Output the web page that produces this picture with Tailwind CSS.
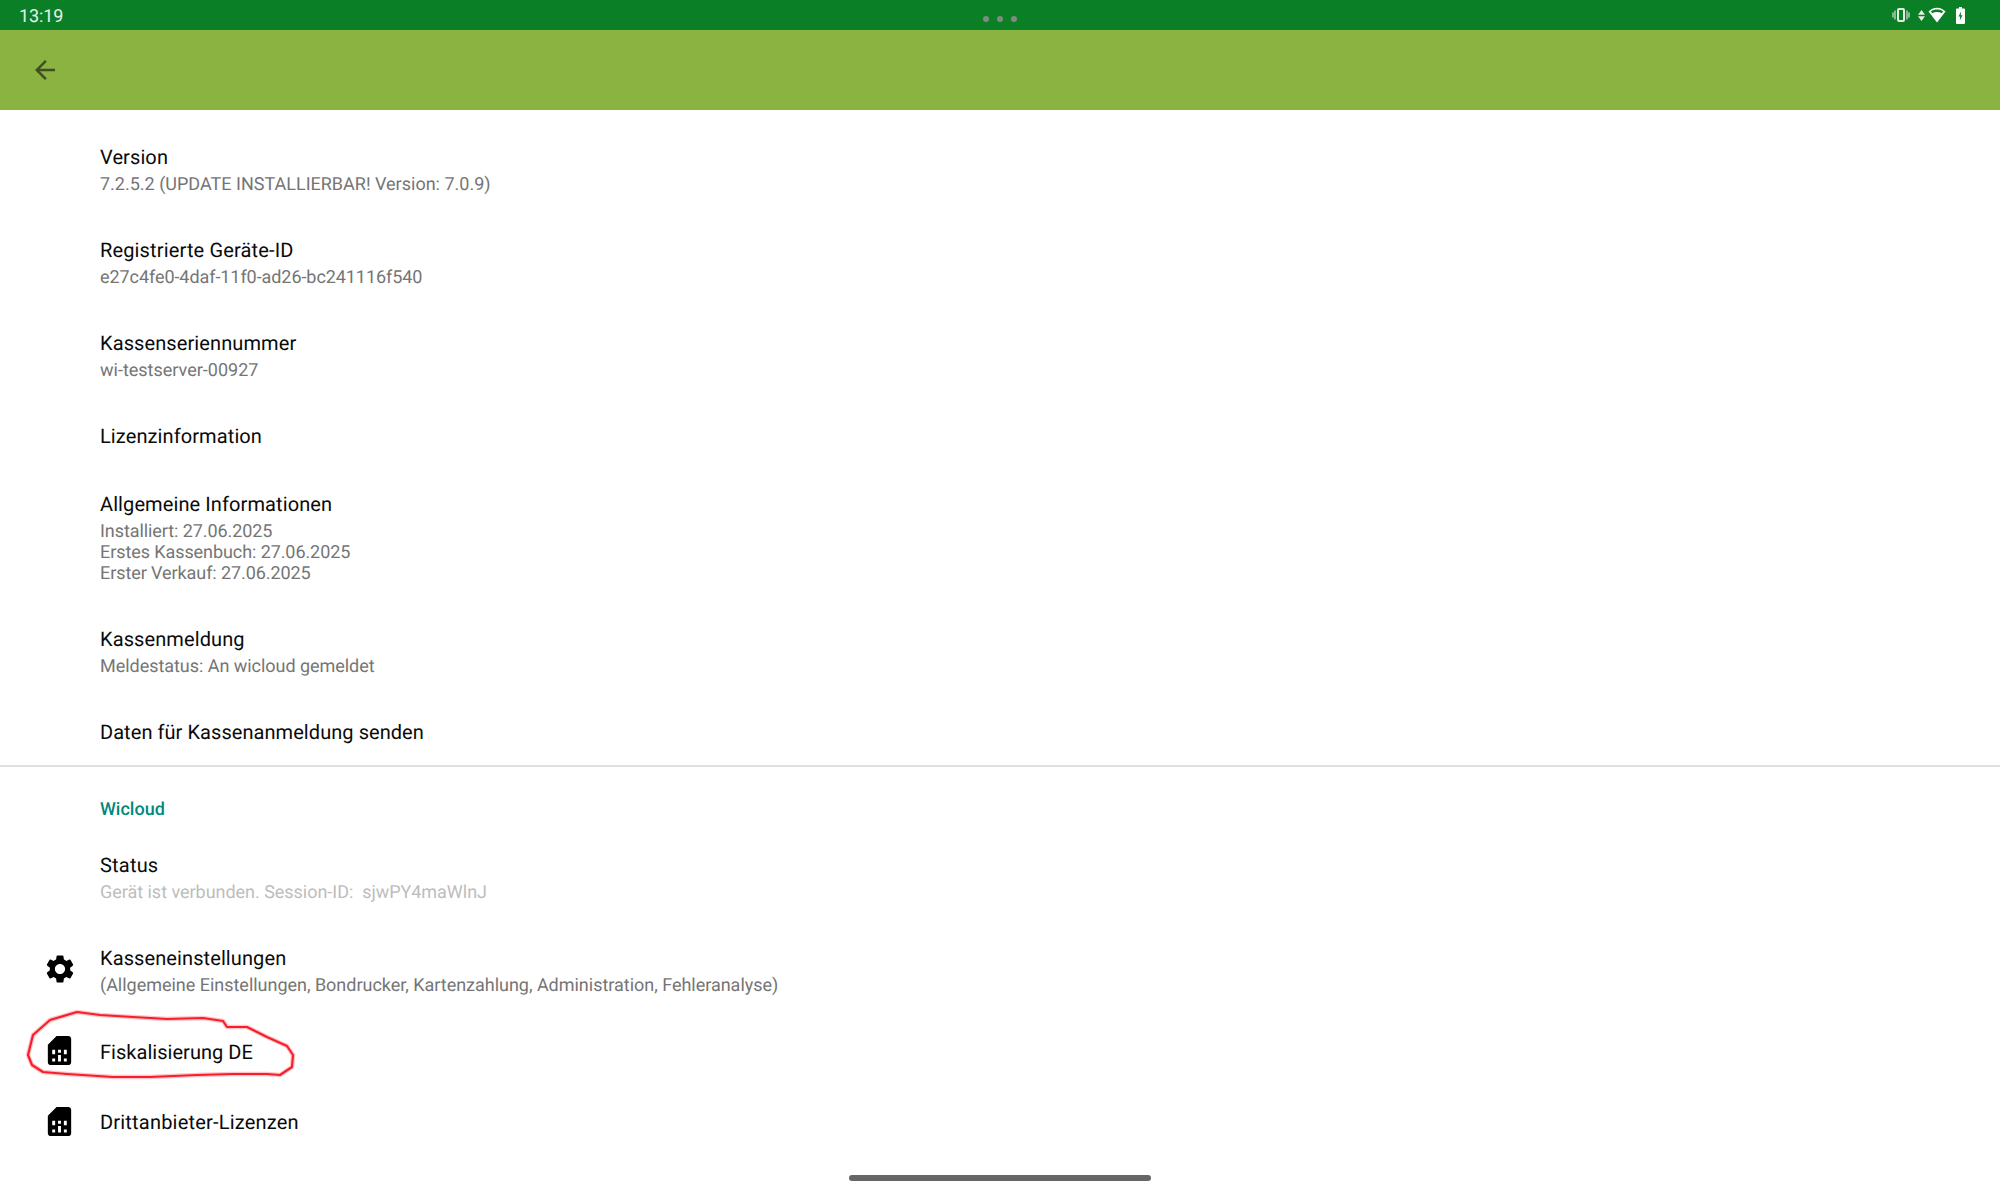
<!DOCTYPE html>
<html lang="de">
<head>
    <meta charset="UTF-8">
    <title>Einstellungen</title>
    <script src="https://cdn.jsdelivr.net/npm/@tailwindcss/browser@4"></script>
</head>
<body class="bg-white font-['Roboto',sans-serif] [text-rendering:geometricPrecision]">
<div class="relative w-[2000px] h-[1200px] overflow-hidden bg-white">

    <!-- status bar -->
    <div class="relative flex items-center justify-between h-[30px] bg-[#0a7f26] pl-[19px] pr-[35px]">
        <span class="pt-[3px] text-[18px] leading-[30px] tracking-[-0.1px] text-white/90">13:19</span>
        <div class="absolute left-[983px] top-[16px] flex gap-[8px]">
            <span class="w-[6px] h-[6px] rounded-full bg-[#808a80]"></span>
            <span class="w-[6px] h-[6px] rounded-full bg-[#808a80]"></span>
            <span class="w-[6px] h-[6px] rounded-full bg-[#808a80]"></span>
        </div>
        <div class="flex items-center">
            <svg class="w-[18px] h-[14px]" viewBox="0 0 18 14" fill="none">
                <rect x="6" y="1" width="6" height="12" rx="1" stroke="#e3f0e3" stroke-width="2"/>
                <path d="M3 2.500v9M1 4.500v5M15 2.500v9M17 4.500v5" stroke="#a9cfb2" stroke-width="1.500"/>
            </svg>
            <svg class="w-[7px] h-[11px] ml-[8px]" viewBox="0 0 7 11" fill="#e3f0e3">
                <path d="M3.500 0L7 4.700H0zM3.500 11L0 6.300h7z"/>
            </svg>
            <svg class="w-[18px] h-[16px] ml-[3px]" viewBox="0 0 18 16">
                <path d="M9 15.500L0.500 4.500C2.800 2 5.700 .7 9 .7s6.200 1.300 8.500 3.800z" fill="#fff"/>
                <path d="M2.900 4.500C4.600 3.100 6.600 2.500 9 2.500s4.400.6 6.100 2L13.700 6.300C12.300 5.500 10.800 5.100 9 5.100s-3.300.4-4.700 1.200z" fill="#0a7f26"/>
            </svg>
            <svg class="w-[9px] h-[17px] ml-[10px]" viewBox="0 0 9 17">
                <path d="M3 0h3v1.500h2a1 1 0 0 1 1 1V16a1 1 0 0 1-1 1H1a1 1 0 0 1-1-1V2.500a1 1 0 0 1 1-1h2z" fill="#fff"/>
                <path d="M5 4.500L2.500 9.500h1.700L3.800 13.500l2.700-5.200H4.800z" fill="#0a7f26"/>
            </svg>
        </div>
    </div>

    <!-- toolbar -->
    <div class="flex items-center h-[80px] bg-[#8bb342] pl-[30px]">
        <svg class="w-[30px] h-[30px]" viewBox="0 0 24 24" fill="#414d22">
            <path d="M20 11H7.830l5.590-5.590L12 4l-8 8 8 8 1.410-1.410L7.830 13H20v-2z"/>
        </svg>
    </div>

    <!-- preference list -->
    <div class="pt-[14px]">
        <div class="pl-[100px] pt-[20px] pb-[22px]">
            <p class="text-[20px] leading-[27px] tracking-[0.1px] text-[#0a0a0a]">Version</p>
            <p class="mt-[3px] text-[18px] leading-[21px] text-[#757575]">7.2.5.2 (UPDATE INSTALLIERBAR! Version: 7.0.9)</p>
        </div>
        <div class="pl-[100px] pt-[20px] pb-[22px]">
            <p class="text-[20px] leading-[27px] tracking-[0.15px] text-[#0a0a0a]">Registrierte Geräte-ID</p>
            <p class="mt-[3px] text-[18px] leading-[21px] tracking-[-0.07px] text-[#757575]">e27c4fe0-4daf-11f0-ad26-bc241116f540</p>
        </div>
        <div class="pl-[100px] pt-[20px] pb-[22px]">
            <p class="text-[20px] leading-[27px] tracking-[0.1px] text-[#0a0a0a]">Kassenseriennummer</p>
            <p class="mt-[3px] text-[18px] leading-[21px] text-[#757575]">wi-testserver-00927</p>
        </div>
        <div class="pl-[100px] pt-[20px] pb-[21px]">
            <p class="text-[20px] leading-[27px] tracking-[0.1px] text-[#0a0a0a]">Lizenzinformation</p>
        </div>
        <div class="pl-[100px] pt-[20px] pb-[22px]">
            <p class="text-[20px] leading-[27px] tracking-[0.1px] text-[#0a0a0a]">Allgemeine Informationen</p>
            <p class="mt-[3px] text-[18px] leading-[21px] tracking-[-0.08px] text-[#757575]">Installiert: 27.06.2025<br>Erstes Kassenbuch: 27.06.2025<br>Erster Verkauf: 27.06.2025</p>
        </div>
        <div class="pl-[100px] pt-[20px] pb-[22px]">
            <p class="text-[20px] leading-[27px] tracking-[0.1px] text-[#0a0a0a]">Kassenmeldung</p>
            <p class="mt-[3px] text-[18px] leading-[21px] tracking-[-0.04px] text-[#757575]">Meldestatus: An wicloud gemeldet</p>
        </div>
        <div class="pl-[100px] pt-[20px] pb-[19px]">
            <p class="text-[20px] leading-[27px] tracking-[0.06px] text-[#0a0a0a]">Daten für Kassenanmeldung senden</p>
        </div>
        <div class="h-[2px] bg-[#e0e0e0]"></div>

        <div class="pl-[100px] pt-[31px] pb-[10px]">
            <p class="text-[18px] leading-[24px] font-medium text-[#00897b]">Wicloud</p>
        </div>
        <div class="pl-[100px] pt-[20px] pb-[22px]">
            <p class="text-[20px] leading-[27px] tracking-[0.2px] text-[#0a0a0a]">Status</p>
            <p class="mt-[3px] text-[18px] leading-[21px] tracking-[-0.03px] text-[#bdbdbd]">Gerät ist verbunden. Session-ID:&nbsp; sjwPY4maWlnJ</p>
        </div>
        <div class="flex items-center pt-[20px] pb-[22px]">
            <div class="w-[100px] pl-[43px] mb-[4px]">
                <svg class="w-[34px] h-[34px]" viewBox="0 0 24 24" fill="#000">
                    <path d="M19.140 12.940c.04-.3.060-.61.060-.94 0-.32-.020-.64-.070-.94l2.030-1.580c.18-.14.23-.41.120-.61l-1.920-3.320c-.12-.22-.37-.29-.59-.22l-2.390.96c-.5-.38-1.030-.7-1.620-.94l-.36-2.540c-.04-.24-.24-.41-.48-.41h-3.840c-.24 0-.43.170-.47.410l-.36 2.540c-.59.24-1.130.57-1.620.94l-2.390-.96c-.22-.080-.47 0-.59.220L2.740 8.870c-.12.210-.080.47.120.61l2.030 1.580c-.05.3-.09.63-.09.94s.02.64.07.94l-2.030 1.580c-.18.14-.23.41-.12.61l1.920 3.320c.12.220.37.290.59.220l2.390-.96c.5.380 1.030.7 1.620.94l.36 2.540c.05.240.24.410.48.410h3.840c.24 0 .44-.170.47-.410l.36-2.540c.59-.24 1.130-.56 1.620-.94l2.390.96c.22.080.47 0 .59-.22l1.920-3.320c.12-.22.070-.47-.12-.61l-2.010-1.580zM12 15.600c-1.980 0-3.600-1.620-3.600-3.600s1.620-3.600 3.600-3.600 3.600 1.620 3.600 3.600-1.620 3.600-3.600 3.600z"/>
                </svg>
            </div>
            <div>
                <p class="text-[20px] leading-[27px] tracking-[0.1px] text-[#0a0a0a]">Kasseneinstellungen</p>
                <p class="mt-[3px] text-[18px] leading-[21px] tracking-[-0.02px] text-[#757575]">(Allgemeine Einstellungen, Bondrucker, Kartenzahlung, Administration, Fehleranalyse)</p>
            </div>
        </div>
        <div class="flex items-center h-[69px]">
            <div class="w-[100px] pl-[42px] mb-[4px]">
                <svg class="w-[35px] h-[35px]" viewBox="0 0 24 24" fill="#000">
                    <path fill-rule="evenodd" d="M19.990 4c0-1.100-.89-2-1.990-2h-8L4 8v12c0 1.100.9 2 2 2h12c1.100 0 2-.9 2-2zM7 11.500h2v3H7zM11 11.500h2v2h-2zM15 11.500h2v3h-2zM11 15h2v4.500h-2zM7 17.500h2v2H7zM15 17.500h2v2h-2z"/>
                </svg>
            </div>
            <p class="text-[20px] leading-[27px] tracking-[0.03px] text-[#0a0a0a]">Fiskalisierung DE</p>
        </div>
        <div class="flex items-center h-[70px]">
            <div class="w-[100px] pl-[42px] mb-[2px]">
                <svg class="w-[35px] h-[35px]" viewBox="0 0 24 24" fill="#000">
                    <path fill-rule="evenodd" d="M19.990 4c0-1.100-.89-2-1.990-2h-8L4 8v12c0 1.100.9 2 2 2h12c1.100 0 2-.9 2-2zM7 11.500h2v3H7zM11 11.500h2v2h-2zM15 11.500h2v3h-2zM11 15h2v4.500h-2zM7 17.500h2v2H7zM15 17.500h2v2h-2z"/>
                </svg>
            </div>
            <p class="text-[20px] leading-[27px] tracking-[0.2px] text-[#0a0a0a]">Drittanbieter-Lizenzen</p>
        </div>
    </div>

    <!-- hand drawn annotation over the screenshot -->
    <svg class="absolute left-0 top-[1000px] w-[320px] h-[90px]" viewBox="0 1000 320 90" fill="none" stroke-linejoin="round">
        <path d="M28 1055L33 1035L50 1020L77 1012L100 1015L133 1017L167 1019L203 1018L223 1021L227 1027L247 1027L267 1037L287 1046L293 1055L292 1067L280 1075L267 1074L233 1074L197 1075L150 1077L113 1077L67 1074L43 1072L32 1065Z" stroke="#ff8a90" stroke-width="4.500" stroke-opacity="0.5"/>
        <path d="M28 1055L33 1035L50 1020L77 1012L100 1015L133 1017L167 1019L203 1018L223 1021L227 1027L247 1027L267 1037L287 1046L293 1055L292 1067L280 1075L267 1074L233 1074L197 1075L150 1077L113 1077L67 1074L43 1072L32 1065Z" stroke="#f5202c" stroke-width="2.200"/>
    </svg>

    <!-- gesture bar -->
    <div class="absolute left-[849px] top-[1175px] w-[302px] h-[6px] rounded-full bg-[#666666]"></div>
</div>
</body>
</html>
